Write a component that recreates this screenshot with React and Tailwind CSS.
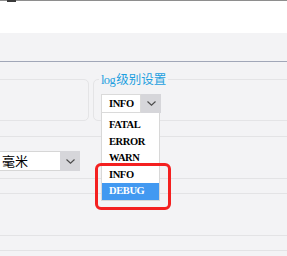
import React from "react";

function Chevron() {
  return (
    <svg width="9" height="5" viewBox="0 0 9 5" className="block">
      <polyline points="0.5,0.5 4.5,4.2 8.5,0.5" fill="none" stroke="#4a4a4a" strokeWidth="1.1" />
    </svg>
  );
}

export default function App() {
  const items = ["FATAL", "ERROR", "WARN", "INFO", "DEBUG"];
  return (
    <div className="relative w-[287px] h-[256px] overflow-hidden bg-[#f3f3f5] font-['Liberation_Sans','Noto_Sans_CJK_SC',sans-serif]">
      <div className="relative h-[1px] bg-[#8e8e8e]">
        <div className="absolute left-[7px] top-0 w-[9px] h-[2px] bg-[#3a3a3a]" />
      </div>
      <div className="h-[32px] bg-white" />
      <div className="h-[28px]" />
      <div className="h-[1px] bg-[#a1a7b8]" />
      <div className="h-[17px]" />
      {/* group boxes */}
      <div className="flex h-[42px]">
        <div className="-ml-[8px] w-[97px] shrink-0 border border-[#e4e4e6] rounded-[5px]" />
        <div className="relative ml-[4px] flex-1 -mr-[10px] border border-[#e4e4e6] rounded-[5px] pl-[7px] pt-[14px]">
          <div className="absolute left-[5px] -top-[8px] px-[2px] bg-[#f3f3f5] leading-[14px] text-[#1d9fdf] whitespace-nowrap">
            <span className="text-[12.5px] font-['Liberation_Serif',serif] tracking-[-0.6px] mr-[1px]">log</span>
            <span className="text-[12.5px] font-['Noto_Sans_CJK_SC',sans-serif]">级别设置</span>
          </div>
          <div className="relative flex w-[60px] h-[19px]">
            <div className="w-[40px] h-full bg-white border border-[#dadada] pl-[7px] flex items-center text-[10.5px] font-bold text-black font-['Liberation_Serif',serif] tracking-[-0.4px]">
              INFO
            </div>
            <div className="w-[20px] h-full bg-[#d6d6da] flex items-center justify-center">
              <Chevron />
            </div>
            <div className="absolute left-0 top-[19px] w-[59px] h-[88px] bg-white border border-[#d8d8d8] border-t-0 pt-[4px] z-10">
              {items.map((it) => (
                <div
                  key={it}
                  className={
                    "h-[16.5px] flex items-center pl-[7px] text-[10.5px] font-bold tracking-[-0.4px] font-['Liberation_Serif',serif] " +
                    (it === "DEBUG" ? "bg-[#4299f1] text-white" : "text-black")
                  }
                >
                  {it}
                </div>
              ))}
            </div>
          </div>
        </div>
      </div>
      <div className="h-[15px]" />
      <div className="h-[1px] bg-[#e3e3e5]" />
      <div className="h-[14px]" />
      <div className="flex w-[80px] h-[20px]">
        <div className="w-[60px] h-full bg-white border-t border-b border-[#d6d6d6] flex items-center pl-[2px] text-[13px] text-black font-['Noto_Sans_CJK_SC',sans-serif]">
          毫米
        </div>
        <div className="w-[20px] h-full bg-[#d6d6da] flex items-center justify-center">
          <Chevron />
        </div>
      </div>
      <div className="h-[7px]" />
      <div className="h-[1px] bg-[#e3e3e5]" />
      <div className="h-[14px]" />
      <div className="h-[1px] bg-[#e3e3e5]" />
      <div className="h-[41px]" />
      <div className="h-[1px] bg-[#e3e3e5]" />
      <div className="h-[14px]" />
      <div className="h-[1px] bg-[#e3e3e5]" />
      <div className="absolute left-[95px] top-[163px] w-[76px] h-[47px] border-[3px] border-[#f42020] rounded-[6px] z-20" />
    </div>
  );
}
